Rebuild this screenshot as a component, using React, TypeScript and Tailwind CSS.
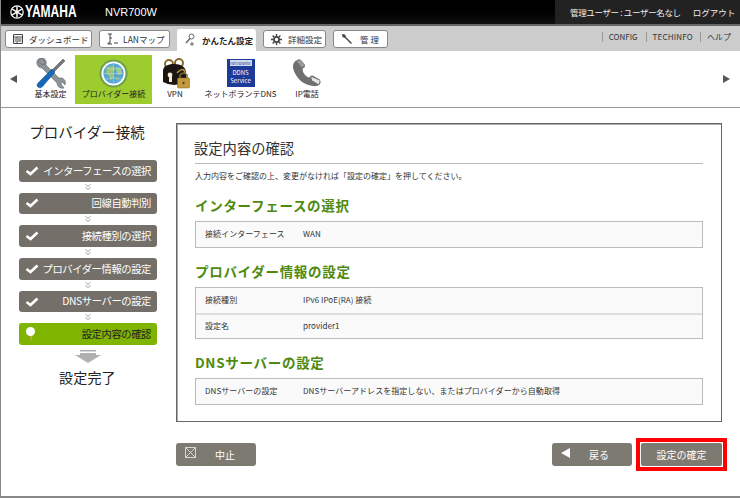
import React from "react";

const F = { fontFamily: '"Noto Sans CJK JP", sans-serif' };

function Tool() {
  return (
    <svg width="30" height="31" viewBox="0 0 30 31">
      <path d="M2 3 L6 7 L9 6 L9 3 L6 0 C2 0 0 3 1 6 C2 9 4 10 6 10 L21 25 C21 29 25 31 28 30 L25 26 L26 24 L29 27 C31 23 27 19 23 20 L10 7 C11 3 9 0 6 0 Z" fill="#8d9297" stroke="#5b5f63" strokeWidth="0.5" />
      <path d="M27 1 L29 3 L18 14 L16 12 Z" fill="#74777a" stroke="#444" strokeWidth="0.4" />
      <path d="M16 11 L19 14 L7 28 C5 31 1 30 1 27 C1 26 2 25 3 24 Z" fill="#1667b8" stroke="#0b4f94" strokeWidth="0.5" />
    </svg>
  );
}
function Globe() {
  return (
    <svg width="29" height="29" viewBox="0 0 30 30">
      <circle cx="15" cy="15" r="14.5" fill="#6f9f4f" />
      <circle cx="15" cy="15" r="12.4" fill="#ffffff" />
      <circle cx="15" cy="15" r="10.6" fill="#55a7d6" />
      <path d="M8 9 L14 7 L17 10 L14 14 L15 19 L12 22 L10 17 L7 14 Z" fill="#9cc478" />
      <path d="M18 8 L23 10 L24 15 L20 17 L18 13 Z" fill="#a5c98a" />
      <path d="M17 19 L21 19 L19 23 Z" fill="#8fb96e" />
      <path d="M5 15 H25 M15 5 V25 M7 9 Q15 12 23 9 M7 21 Q15 18 23 21" stroke="#d7eef7" strokeWidth="0.4" fill="none" />
    </svg>
  );
}
function Keys() {
  return (
    <svg width="30" height="31" viewBox="0 0 30 31">
      <circle cx="9" cy="6" r="4" fill="none" stroke="#8a6d2c" strokeWidth="2" />
      <circle cx="19" cy="5" r="4" fill="none" stroke="#8a6d2c" strokeWidth="2" />
      <path d="M3 24 L3 13 C3 8 8 6 14 6 C21 6 26 9 26 15 L26 24 Q14 30 3 24 Z" fill="#1d1512" />
      <circle cx="10" cy="17" r="2.4" fill="#f5ead2" />
      <path d="M9 18 H12 V24 H9 Z" fill="#f5ead2" />
      <path d="M17 15 Q24 8 25 15" fill="none" stroke="#b6923f" strokeWidth="1.5" />
      <path d="M20 20 V17 Q24 13 27 17 V20" fill="none" stroke="#7c6a3a" strokeWidth="1.5" />
      <rect x="17.5" y="20" width="12" height="10" rx="1" fill="#c49a3f" stroke="#80611e" strokeWidth="0.5" />
      <circle cx="23.5" cy="25" r="1.2" fill="#5c4413" />
    </svg>
  );
}
function Phone() {
  return (
    <svg width="31" height="30" viewBox="0 0 32 32">
      <path d="M5 2 C1 4 -1 8 2 15 C6 24 14 30 24 30 C28 30 30 28 30 25 L29 23 L22 19 C20 18 19 19 18 21 C14 20 10 15 11 11 C13 10 14 9 13 7 L9 2 C8 1 6 1 5 2 Z" fill="#6f6f6f" />
      <path d="M4 3 L9 2 L13 8 L10 10 Z" fill="#9a9a9a" />
      <path d="M20 20 L29 24 L28 28 L21 24 Z" fill="#e5e5e5" />
    </svg>
  );
}
function Ddns() {
  return (
    <div className="flex h-[28px] w-[28px] flex-col items-center justify-between bg-[#1c3a97] pb-[1px] text-white">
      <div className="mt-[1px] h-[6px] w-[22px] overflow-hidden bg-[#d4dcf0] text-center text-[4px] leading-[6px] whitespace-nowrap text-[#1c3a97]">
        netVolante
      </div>
      <div className="text-center text-[6px] leading-[8.7px]">
        DDNS
        <br />
        Service
      </div>
    </div>
  );
}

function MenuItem({ icon, label, active, w }: { icon: React.ReactNode; label: string; active?: boolean; w: string }) {
  return (
    <div className={`flex h-[49px] flex-col items-center ${w} ${active ? "bg-[#9ccc2e]" : ""}`}>
      <div className="flex h-[34px] items-center justify-center pt-[3px]">{icon}</div>
      <div className="text-[8px] leading-[10px] whitespace-nowrap text-[#222]">{label}</div>
    </div>
  );
}

function Check() {
  return (
    <svg width="14" height="10" viewBox="0 0 14 10" className="shrink-0">
      <path d="M1.5 5 L5.5 8 L12.5 1.5" fill="none" stroke="#fff" strokeWidth="2.6" />
    </svg>
  );
}
function Step({ label, current }: { label: string; current?: boolean }) {
  return (
    <div
      className={`flex h-[21.5px] w-[138px] items-center justify-between rounded-[3px] pr-[6px] pl-[6px] text-[10.3px] whitespace-nowrap ${
        current ? "bg-[#7fb400] text-[#222]" : "bg-[#756f69] text-white"
      }`}
    >
      {current ? (
        <svg width="12" height="17" viewBox="0 0 12 17" className="shrink-0">
          <path d="M5 9 H7 L6 16 Z" fill="#d9a866" />
          <circle cx="5.5" cy="5.5" r="4.5" fill="#fff" />
        </svg>
      ) : (
        <Check />
      )}
      <span className="mb-[1px] tracking-[-0.4px]">{label}</span>
    </div>
  );
}
function Chev() {
  return (
    <div className="flex h-[11.2px] w-[138px] items-center justify-center">
      <svg width="6" height="7" viewBox="0 0 6 7">
        <path d="M0.5 0.5 L3 2.5 L5.5 0.5 M0.5 3.5 L3 5.5 L5.5 3.5" fill="none" stroke="#888" strokeWidth="0.8" />
      </svg>
    </div>
  );
}

function Tab({ w, icon, label, active, gap }: { w: string; icon: React.ReactNode; label: string; active?: boolean; gap?: string }) {
  return active ? (
    <div className={`flex h-[22px] items-center gap-[6px] rounded-t-[3px] bg-white pl-[7px] text-[8.5px] font-bold text-[#222] ${w}`}>
      {icon}
      <span className="whitespace-nowrap">{label}</span>
    </div>
  ) : (
    <div className={`mt-[1px] flex h-[18px] items-center ${gap ?? "gap-[6px]"} rounded-[3px] border border-[#888] bg-white pl-[7px] text-[8.5px] text-[#333] ${w}`}>
      {icon}
      <span className="whitespace-nowrap">{label}</span>
    </div>
  );
}

function Row({ k, v, border }: { k: string; v: string; border?: boolean }) {
  return (
    <div className={`flex h-[25px] items-center pl-[9px] text-[8px] tracking-[0.05px] text-[#333] ${border ? "border-t-2 border-[#ddd]" : ""}`}>
      <div className="mb-[2px] w-[98px] whitespace-nowrap">{k}</div>
      <div className="mb-[2px] whitespace-nowrap">{v}</div>
    </div>
  );
}

function Green({ children, mt }: { children: React.ReactNode; mt: string }) {
  return <div className={`${mt} h-[20px] text-[13.5px] leading-[20px] font-bold tracking-[0.7px] whitespace-nowrap text-[#4f8a10]`}>{children}</div>;
}

export default function App() {
  return (
    <div style={F} className="flex h-[498px] w-[740px] flex-col overflow-hidden border-b-2 border-l border-[#888] bg-white">
      <header className="flex h-[24px] shrink-0 justify-between bg-gradient-to-b from-[#000] to-[#111] text-white">
        <div className="flex items-center">
          <div className="ml-[9px] flex items-center gap-[1px]">
            <svg width="14" height="14" viewBox="0 0 14 14">
              <circle cx="7" cy="7" r="6.2" fill="none" stroke="#fff" strokeWidth="1.2" />
              <path d="M7 1.5 V12.5 M2.2 4.2 L11.8 9.8 M11.8 4.2 L2.2 9.8" stroke="#fff" strokeWidth="1.5" />
            </svg>
            <span className="block w-[47px] origin-left scale-x-[0.75] text-[16px] font-bold whitespace-nowrap" style={{ fontFamily: '"Liberation Sans", sans-serif' }}>
              YAMAHA
            </span>
          </div>
          <span className="ml-[33px] text-[11px]" style={{ fontFamily: '"Liberation Sans", sans-serif' }}>
            NVR700W
          </span>
        </div>
        <div className="flex w-[185px] items-center bg-[#222] pl-[15px] text-[8.5px] whitespace-nowrap text-[#eee]">
          <span className="tracking-[-0.35px]">管理ユーザー : ユーザー名なし</span>
          <span className="ml-[12px]">ログアウト</span>
        </div>
      </header>
      <div className="h-[2px] shrink-0 bg-[#666]" />
      <nav className="flex h-[25px] shrink-0 items-start justify-between bg-[#ccc] pl-[4px]">
        <div className="mt-[3px] flex h-[22px] items-start gap-[7px]">
          <Tab
            w="w-[87px]"
            label="ダッシュボード"
            icon={
              <svg width="10" height="10" viewBox="0 0 10 10" className="shrink-0">
                <path d="M0.5 0.5 H9.5 V9.5 H0.5 Z M0.5 3 H9.5 M4 3 V9.5 M1.5 5 H3 M1.5 7 H3 M5 5 H8.5 M5 7 H8.5" fill="none" stroke="#444" />
              </svg>
            }
          />
          <Tab
            w="w-[71px]"
            gap="gap-[5px]"
            label="LANマップ"
            icon={
              <svg width="11" height="12" viewBox="0 0 11 12" className="shrink-0">
                <path d="M1 1 H5 M3 1 V10 H1 V11 H5 M3 5 H5 M7 10 H11" fill="none" stroke="#444" />
              </svg>
            }
          />
          <Tab
            active
            w="w-[79px]"
            label="かんたん設定"
            icon={
              <svg width="12" height="14" viewBox="0 0 12 14" className="shrink-0">
                <circle cx="7.5" cy="3.5" r="2.5" fill="none" stroke="#666" />
                <path d="M6 5.5 L2 10" stroke="#666" strokeWidth="1.5" />
                <path d="M8 9 V13 M6 11 H10" stroke="#666" />
              </svg>
            }
          />
          <Tab
            w="w-[63px]"
            label="詳細設定"
            icon={
              <svg width="11" height="11" viewBox="0 0 11 11" className="shrink-0">
                <circle cx="5.5" cy="5.5" r="2.6" fill="none" stroke="#444" strokeWidth="1.8" />
                <path d="M5.5 0 V2 M5.5 9 V11 M0 5.5 H2 M9 5.5 H11 M1.6 1.6 L3 3 M8 8 L9.4 9.4 M9.4 1.6 L8 3 M3 8 L1.6 9.4" stroke="#444" strokeWidth="1.4" />
              </svg>
            }
          />
          <Tab
            w="w-[55px]"
            gap="gap-[7px]"
            label="管 理"
            icon={
              <svg width="12" height="12" viewBox="0 0 12 12" className="shrink-0">
                <path d="M1 1 L4 1.5 L5 4 L11 10 L10 11 L4 5 L1.5 4 Z" fill="#444" />
              </svg>
            }
          />
        </div>
        <div className="mt-[6px] flex items-center pr-[9px] text-[8px] leading-[10px] whitespace-nowrap text-[#333]">
          <span className="border-l border-[#999] pl-[6px]">CONFIG</span>
          <span className="ml-[8px] border-l border-[#999] pl-[6px] tracking-[0.2px]">TECHINFO</span>
          <span className="ml-[7px] border-l border-[#999] pl-[6px]">ヘルプ</span>
        </div>
      </nav>
      <div className="flex h-[57px] shrink-0 items-center border-b border-[#999]">
        <svg width="7" height="8" viewBox="0 0 7 8" className="ml-[9px] shrink-0">
          <path d="M7 0 V8 L0 4 Z" fill="#555" />
        </svg>
        <div className="ml-[12px] flex items-center">
          <MenuItem w="w-[43px] mr-[3px]" label="基本設定" icon={<Tool />} />
          <MenuItem w="w-[77px]" active label="プロバイダー接続" icon={<Globe />} />
          <MenuItem w="w-[46px]" label="VPN" icon={<Keys />} />
          <MenuItem w="w-[83px] ml-[1px]" label="ネットボランテDNS" icon={<Ddns />} />
          <MenuItem w="w-[50px]" label="IP電話" icon={<Phone />} />
        </div>
        <svg width="7" height="8" viewBox="0 0 7 8" className="mr-[10px] ml-auto shrink-0">
          <path d="M0 0 V8 L7 4 Z" fill="#555" />
        </svg>
      </div>

      <main className="flex min-h-0 flex-1">
        <aside className="flex w-[175px] shrink-0 flex-col items-start pl-[18px]">
          <div className="mt-[13px] -ml-[1px] h-[22px] w-[138px] text-center text-[14.5px] leading-[22px] whitespace-nowrap text-[#222]">プロバイダー接続</div>
          <div className="mt-[17px]" />
          <Step label="インターフェースの選択" />
          <Chev />
          <Step label="回線自動判別" />
          <Chev />
          <Step label="接続種別の選択" />
          <Chev />
          <Step label="プロバイダー情報の設定" />
          <Chev />
          <Step label="DNSサーバーの設定" />
          <Chev />
          <Step current label="設定内容の確認" />
          <svg width="26" height="13" viewBox="0 0 26 13" className="mt-[5px] ml-[56px]">
            <path d="M5 0 H21 V1.5 H5 Z M5 3 H21 V5 H26 L13 13 L0 5 H5 Z" fill="#b0b0b0" />
          </svg>
          <div className="mt-[4px] ml-[40px] text-[14px] leading-[20px] tracking-[0.2px] text-[#222]">設定完了</div>
        </aside>
        <section className="flex w-[546px] flex-col">
          <div className="mt-[15px] h-[299px] shrink-0 border border-[#666] px-[18px] pt-[13px] shadow-[inset_1px_1px_0_#aaa]">
            <div className="h-[27px] border-b border-[#bbb] text-[14.3px] leading-[22px] text-[#333]">
              <span className="-ml-[1px] block">設定内容の確認</span>
            </div>
            <div className="mt-[6px] h-[12px] text-[8px] leading-[12px] whitespace-nowrap text-[#333]">入力内容をご確認の上、変更がなければ「設定の確定」を押してください。</div>
            <Green mt="mt-[13px]">インターフェースの選択</Green>
            <div className="mt-[6px] border border-[#bbb] bg-[#fafafa]">
              <Row k="接続インターフェース" v="WAN" />
            </div>
            <Green mt="mt-[13px]">プロバイダー情報の設定</Green>
            <div className="mt-[6px] border border-[#bbb] bg-[#fafafa]">
              <Row k="接続種別" v="IPv6 IPoE(RA) 接続" />
              <Row border k="設定名" v="provider1" />
            </div>
            <Green mt="mt-[13px]">DNSサーバーの設定</Green>
            <div className="mt-[6px] border border-[#bbb] bg-[#fafafa]">
              <Row k="DNSサーバーの設定" v="DNSサーバーアドレスを指定しない、またはプロバイダーから自動取得" />
            </div>
          </div>
          <div className="mt-[21px] flex items-center text-[10px] text-white">
            <div className="flex h-[23px] w-[80px] items-center rounded-[3px] bg-[#7d7a72] pl-[9px]">
              <svg width="11" height="11" viewBox="0 0 11 11" className="mb-[4px] shrink-0">
                <path d="M0.5 0.5 H10.5 V10.5 H0.5 Z M0.5 0.5 L10.5 10.5 M10.5 0.5 L0.5 10.5" fill="none" stroke="#eee" strokeWidth="0.8" />
              </svg>
              <span className="mb-[1px] ml-[19px]">中止</span>
            </div>
            <div className="ml-auto flex h-[23px] w-[80px] items-center rounded-[3px] bg-[#7d7a72] pl-[9px]">
              <svg width="9" height="10" viewBox="0 0 9 10" className="mb-[4px] shrink-0">
                <path d="M9 0 V10 L0 5 Z" fill="#fff" />
              </svg>
              <span className="mb-[1px] ml-[19px]">戻る</span>
            </div>
            <div className="-my-[5px] -mr-[5px] ml-[4px] border-4 border-[#ff0000] bg-white p-[1px]">
              <div className="flex h-[23px] w-[81px] items-center justify-center rounded-[2px] bg-[#7d7a72]">
                <span className="mb-[1px]">設定の確定</span>
              </div>
            </div>
          </div>
        </section>
      </main>
    </div>
  );
}
